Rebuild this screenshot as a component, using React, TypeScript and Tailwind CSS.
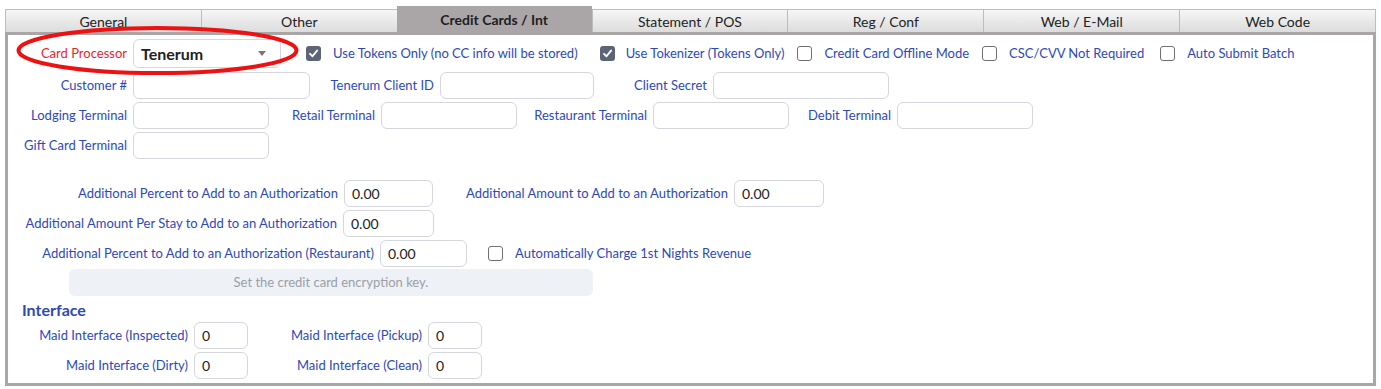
import React from "react";

const tabs = [
  "General",
  "Other",
  "Credit Cards / Int",
  "Statement / POS",
  "Reg / Conf",
  "Web / E-Mail",
  "Web Code",
];

const label = "text-[13px] text-[#2e49b6] text-right whitespace-nowrap";

function Box({ className, value }: { className: string; value?: string }) {
  return (
    <input
      readOnly
      defaultValue={value ?? ""}
      className={`${className} ml-[6px] h-full border border-[#d6d6de] rounded-[6px] bg-white px-[7px] text-[14px] text-[#222] outline-none`}
    />
  );
}

function Check({ on }: { on?: boolean }) {
  if (on) {
    return (
      <span className="w-[15px] h-[15px] rounded-[3px] bg-[#5b6577] flex items-center justify-center shrink-0">
        <svg width="11" height="11" viewBox="0 0 12 12">
          <path d="M2.2 6.3 L4.9 9 L9.9 2.8" fill="none" stroke="#fff" strokeWidth="2" strokeLinecap="round" strokeLinejoin="round" />
        </svg>
      </span>
    );
  }
  return <span className="block w-[15px] h-[15px] rounded-[3px] border-[1.5px] border-[#707070] bg-white shrink-0" />;
}

export default function App() {
  return (
    <div className="relative w-[1381px] h-[389px] bg-white px-[5px] pt-[6px] font-['Lato',sans-serif]">
      {/* tab strip */}
      <div className="flex items-end border-b-[3px] border-[#aaa6a8] h-[29px]">
        {tabs.map((t, i) =>
          i === 2 ? (
            <div key={t} className="flex-1 h-[26px] bg-[#aaa6a8] flex items-center justify-center text-[14px] font-bold text-[#1e1e1e]">
              {t}
            </div>
          ) : (
            <div
              key={t}
              className="flex-1 h-[23px] border-t border-l border-[#bdbdbd] last:border-r bg-linear-to-b from-[#f6f6f6] to-[#dcdcdc] flex items-center justify-center text-[14px] text-[#222]"
            >
              {t}
            </div>
          )
        )}
      </div>

      {/* panel */}
      <div className="border-x-[3px] border-b-[3px] border-[#aaa6a8] pt-[4px] pb-[4px]">
        <div className="flex items-center h-[29px]">
          <span className="w-[119px] text-[13px] text-[#e3282b] text-right whitespace-nowrap">Card Processor</span>
          <div className="ml-[6px] w-[148px] h-full border border-[#d6d6de] rounded-[6px] flex items-center justify-between pl-[7px] pr-[14px]">
            <span className="text-[16px] font-bold text-[#222]">Tenerum</span>
            <span className="w-0 h-0 border-x-[4px] border-x-transparent border-t-[5px] border-t-[#777]" />
          </div>
          <span className="ml-[25px]"><Check on /></span>
          <span className="ml-[12px] text-[13px] text-[#2e49b6] whitespace-nowrap">Use Tokens Only (no CC info will be stored)</span>
          <span className="ml-[22px]"><Check on /></span>
          <span className="ml-[11px] text-[13px] text-[#2e49b6] whitespace-nowrap">Use Tokenizer (Tokens Only)</span>
          <span className="ml-[13px]"><Check /></span>
          <span className="ml-[12px] text-[13px] text-[#2e49b6] whitespace-nowrap">Credit Card Offline Mode</span>
          <span className="ml-[13px]"><Check /></span>
          <span className="ml-[12px] text-[13px] text-[#2e49b6] whitespace-nowrap">CSC/CVV Not Required</span>
          <span className="ml-[16px]"><Check /></span>
          <span className="ml-[12px] text-[13px] text-[#2e49b6] whitespace-nowrap">Auto Submit Batch</span>
        </div>

        <div className="flex items-center h-[27px] mt-[4px]">
          <span className={`${label} w-[119px]`}>Customer #</span>
          <Box className="w-[177px]" />
          <span className={`${label} w-[124px]`}>Tenerum Client ID</span>
          <Box className="w-[154px]" />
          <span className={`${label} w-[113px]`}>Client Secret</span>
          <Box className="w-[176px]" />
        </div>

        <div className="flex items-center h-[27px] mt-[3px]">
          <span className={`${label} w-[119px]`}>Lodging Terminal</span>
          <Box className="w-[136px]" />
          <span className={`${label} w-[106px]`}>Retail Terminal</span>
          <Box className="w-[136px]" />
          <span className={`${label} w-[130px]`}>Restaurant Terminal</span>
          <Box className="w-[136px]" />
          <span className={`${label} w-[102px]`}>Debit Terminal</span>
          <Box className="w-[136px]" />
        </div>

        <div className="flex items-center h-[27px] mt-[3px]">
          <span className={`${label} w-[119px]`}>Gift Card Terminal</span>
          <Box className="w-[136px]" />
        </div>

        <div className="flex items-center h-[27px] mt-[21px]">
          <span className={`${label} w-[330px]`}>Additional Percent to Add to an Authorization</span>
          <Box className="w-[89px]" value="0.00" />
          <span className={`${label} w-[295px]`}>Additional Amount to Add to an Authorization</span>
          <Box className="w-[90px]" value="0.00" />
        </div>

        <div className="flex items-center h-[27px] mt-[3px]">
          <span className={`${label} w-[329px]`}>Additional Amount Per Stay to Add to an Authorization</span>
          <Box className="w-[91px]" value="0.00" />
        </div>

        <div className="flex items-center h-[27px] mt-[3px]">
          <span className={`${label} w-[366px]`}>Additional Percent to Add to an Authorization (Restaurant)</span>
          <Box className="w-[87px]" value="0.00" />
          <span className="ml-[21px]"><Check /></span>
          <span className="ml-[12px] text-[13px] text-[#2e49b6] whitespace-nowrap">Automatically Charge 1st Nights Revenue</span>
        </div>

        <div className="ml-[61px] mt-[2px] w-[524px] h-[27px] rounded-[6px] bg-[#eef1f6] flex items-center justify-center text-[13px] text-[#9a9fa8]">
          Set the credit card encryption key.
        </div>

        <div className="pl-[14px] mt-[4px] h-[20px] text-[16px] font-bold text-[#2e49b6] leading-[20px]">Interface</div>

        <div className="flex items-center h-[27px] mt-[2px]">
          <span className={`${label} w-[180px]`}>Maid Interface (Inspected)</span>
          <Box className="w-[54px]" value="0" />
          <span className={`${label} w-[174px]`}>Maid Interface (Pickup)</span>
          <Box className="w-[54px]" value="0" />
        </div>

        <div className="flex items-center h-[27px] mt-[3px]">
          <span className={`${label} w-[180px]`}>Maid Interface (Dirty)</span>
          <Box className="w-[54px]" value="0" />
          <span className={`${label} w-[174px]`}>Maid Interface (Clean)</span>
          <Box className="w-[54px]" value="0" />
        </div>
      </div>

      {/* annotation */}
      <svg className="absolute left-0 top-0 pointer-events-none" width="1381" height="389">
        <ellipse cx="157.5" cy="50.5" rx="139" ry="22.5" fill="none" stroke="#ee1111" strokeWidth="4" />
      </svg>
    </div>
  );
}
